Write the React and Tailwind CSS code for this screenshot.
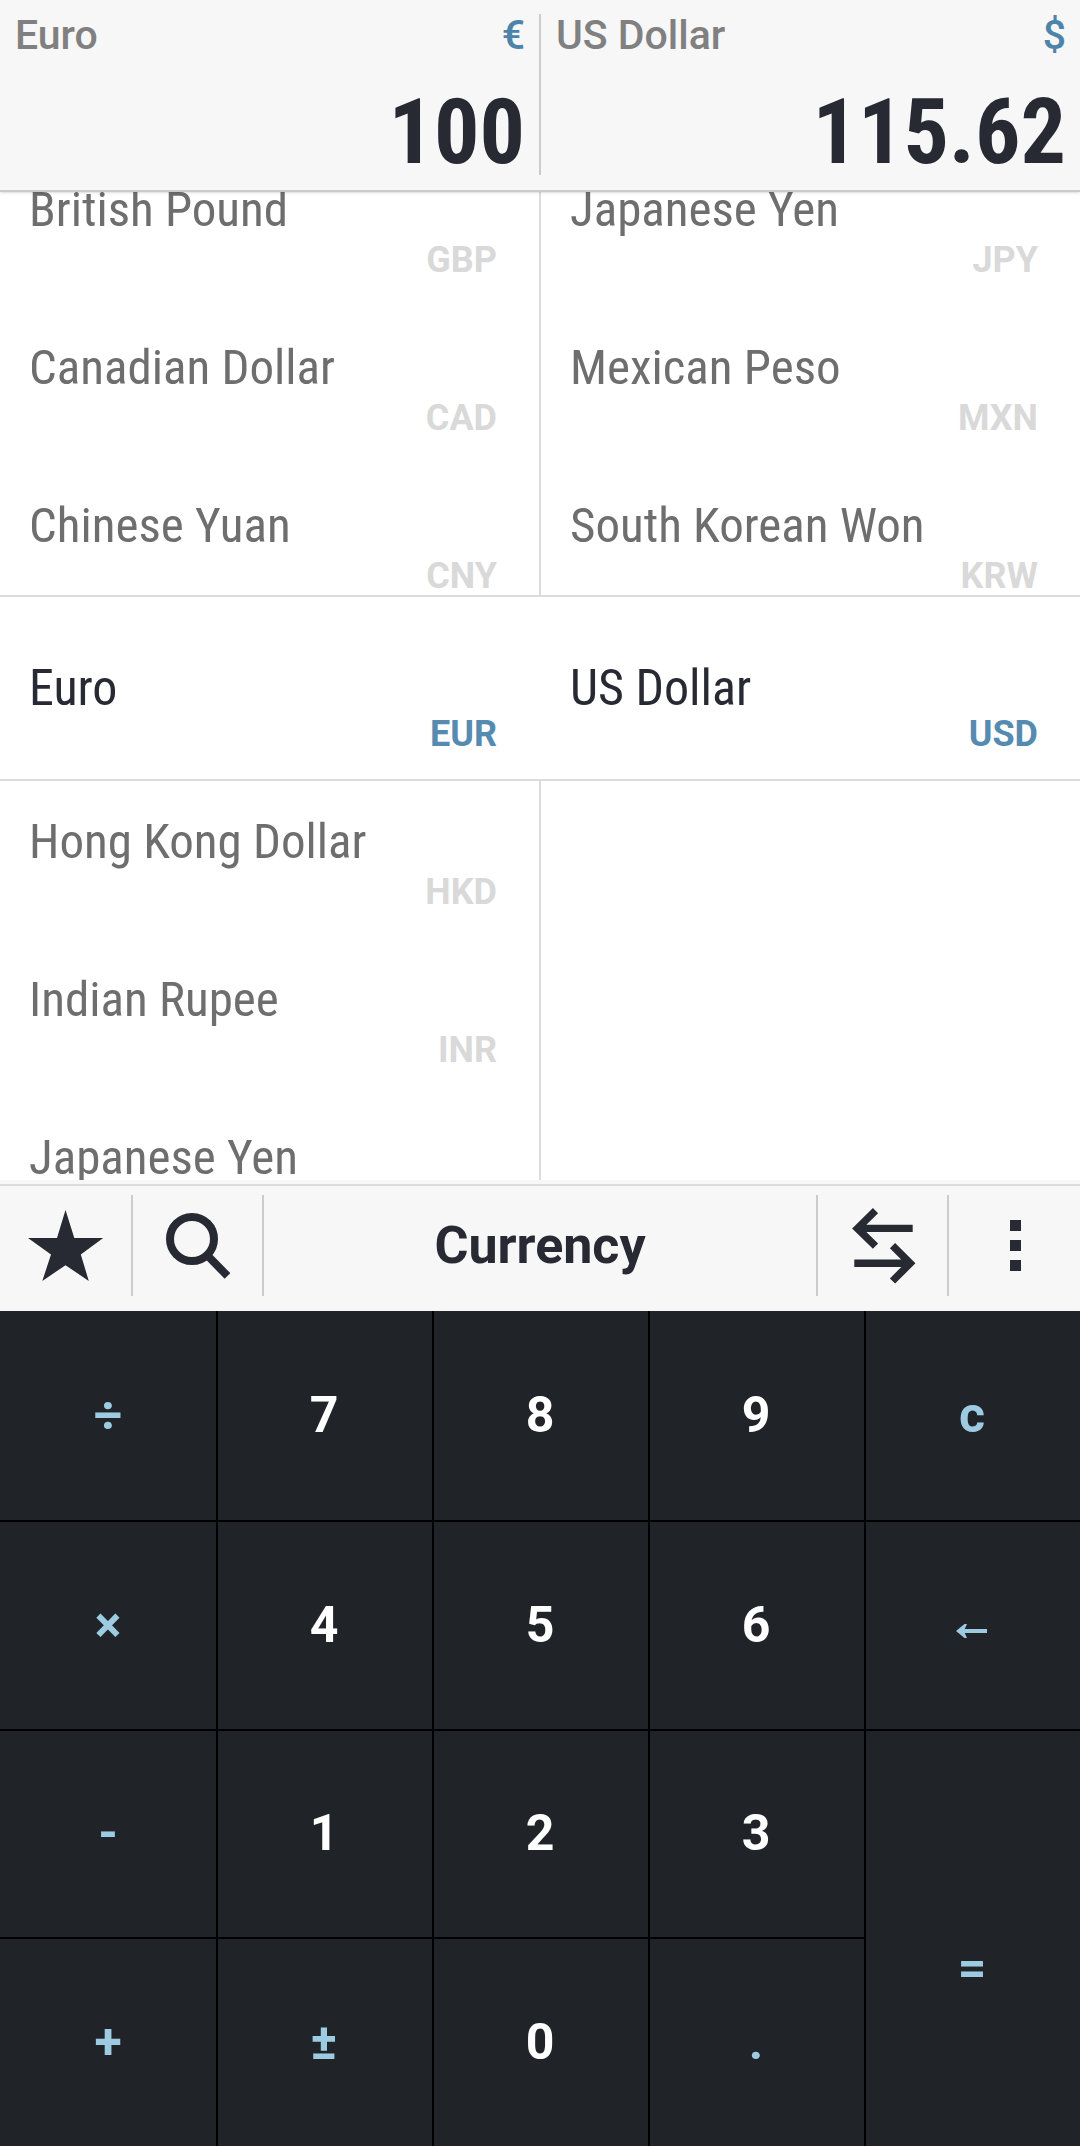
import { useState } from "react";

const fromList = [
  { name: "British Pound", code: "GBP" },
  { name: "Canadian Dollar", code: "CAD" },
  { name: "Chinese Yuan", code: "CNY" },
  { name: "Euro", code: "EUR" },
  { name: "Hong Kong Dollar", code: "HKD" },
  { name: "Indian Rupee", code: "INR" },
  { name: "Japanese Yen", code: "JPY" },
];

const toList = [
  { name: "Japanese Yen", code: "JPY" },
  { name: "Mexican Peso", code: "MXN" },
  { name: "South Korean Won", code: "KRW" },
  { name: "US Dollar", code: "USD" },
];

const RATE = 1.1562;

const keys = [
  "÷", "7", "8", "9", "c",
  "×", "4", "5", "6", "back",
  "-", "1", "2", "3", "=",
  "+", "±", "0", ".",
];


function StarIcon() {
  return (
    <svg width="78" height="74" viewBox="0 0 78 74" fill="currentColor" aria-hidden="true">
      <path d="M38.5 1 47.3 29H76.2L53.8 45.5 61.8 72 38.5 56.2 15.3 72 24 45.5 1 29H30Z" />
    </svg>
  );
}

function SearchIcon() {
  return (
    <svg width="64" height="66" viewBox="0 0 64 66" fill="none" stroke="currentColor" strokeWidth="8" aria-hidden="true">
      <circle cx="26" cy="26" r="22" />
      <path d="M41 42 61.5 63" />
    </svg>
  );
}

function SwapIcon() {
  return (
    <svg width="66" height="78" viewBox="0 0 66 78" fill="none" stroke="currentColor" strokeWidth="7.4" aria-hidden="true">
      <path d="M24.5 3.7 6.4 21.4 24.5 39.2M8 21.4H61.7" />
      <path d="M41.5 38.6 59.2 56.3 41.5 74M3.3 56.3H57" />
    </svg>
  );
}

function MoreIcon() {
  return (
    <svg width="11" height="51" viewBox="0 0 11 51" fill="currentColor" aria-hidden="true">
      <path d="M0 0h11v11H0zM0 20h11v11H0zM0 40h11v11H0z" />
    </svg>
  );
}

function BackIcon() {
  return (
    <svg width="32" height="14" viewBox="0 0 32 14" fill="currentColor" aria-hidden="true">
      <path d="M0 7 8.5 0H11L8.7 5H31V9H8.7L11 14H8.5Z" />
    </svg>
  );
}


function Amount({ id, label, symbol, value, onChange }) {
  return (
    <section className="min-w-0 flex-1 pl-[15px] pr-3.5 pt-3">

      <div className="flex justify-between text-[41px] leading-[47px] font-medium">
        <label htmlFor={id} className="text-[#808080]">{label}</label>
        <span className="text-[#4f84aa]">{symbol}</span>
      </div>

      <input
        id={id}
        type="text"
        inputMode="decimal"
        value={value}
        onChange={onChange}
        readOnly={!onChange}
        className="mt-[18px] block h-[111px] w-full bg-transparent text-right font-['Roboto_Condensed',Roboto,sans-serif] text-[90px] font-bold outline-none"
      />

    </section>
  );
}


function Wheel({ label, items, selected, onSelect, className }) {
  return (
    <ul aria-label={label} className={`h-full min-w-0 flex-1 overflow-hidden ${className}`}>
      {items.map((c, i) => {
        const active = c.code === selected;

        return (
          <li key={c.code} className={i === 0 ? "-mt-[57px]" : ""}>
            <button
              type="button"
              aria-pressed={active}
              onClick={() => onSelect(c)}
              className="relative z-10 flex h-[158px] w-full flex-col justify-end pb-3 pl-[29px] pr-[42px]"
            >
              <span
                className={
                  active
                    ? "text-left font-['Roboto_Condensed',Roboto,sans-serif] text-[50px] leading-[50px]"
                    : "pb-0.5 text-left font-['Roboto_Condensed',Roboto,sans-serif] text-[49px] leading-[54px] text-[#6e6e6e]"
                }
              >
                {c.name}
              </span>
              <span
                className={
                  active
                    ? "text-right text-[36px] leading-[42px] font-bold text-[#568bb1]"
                    : "text-right text-[36px] leading-[42px] font-bold text-[#d9d9d9]"
                }
              >
                {c.code}
              </span>
            </button>
          </li>
        );
      })}
    </ul>
  );
}


export default function App() {

  const [amount, setAmount] = useState("100");
  const [from, setFrom] = useState(fromList[3]);
  const [to, setTo] = useState(toList[3]);

  const result = String(Number(((parseFloat(amount) || 0) * RATE).toFixed(2)));

  const press = (k) => {
    if (k === "c") return setAmount("0");
    if (k === "back") return setAmount((a) => a.slice(0, -1) || "0");
    if (k === "±") return setAmount((a) => String(-Number(a)));
    if (/[0-9.]/.test(k)) setAmount((a) => (a === "0" ? k : a + k));
  };

  return (
    <div className="flex min-h-screen flex-col bg-white font-[Roboto,sans-serif] text-[#282a33]">

      {/* AMOUNTS */}
      <header className="relative z-20 flex h-48 border-b-2 border-[#cccccc] bg-[#f7f7f7] shadow-sm">
        <Amount
          id="from"
          label={from.name}
          symbol="€"
          value={amount}
          onChange={(e) => setAmount(e.target.value)}
        />
        <div className="mt-3.5 mb-[15px] w-0.5 bg-[#cccccc]" />
        <Amount id="to" label={to.name} symbol="$" value={result} />
      </header>


      {/* CURRENCY WHEELS */}
      <main className="relative flex h-[988px] overflow-hidden">
        <Wheel
          label="From"
          items={fromList}
          selected={from.code}
          onSelect={setFrom}
          className="border-r border-[#dcdcdc]"
        />
        <Wheel
          label="To"
          items={toList}
          selected={to.code}
          onSelect={setTo}
          className="border-l border-[#dcdcdc]"
        />
        <div className="absolute inset-x-0 top-[403px] h-[186px] border-y-2 border-[#dcdcdc] bg-white" />
      </main>


      {/* TOOLBAR */}
      <div className="bg-[#f7f7f7] pt-1">
        <div className="flex border-t-2 border-[#dcdcdc] pt-[9px] pb-[15px]">
          <button type="button" aria-label="Favorites" className="flex h-[101px] w-[133px] items-center justify-center border-r-2 border-[#cccccc]">
            <StarIcon />
          </button>
          <button type="button" aria-label="Search" className="flex h-[101px] w-[131px] items-center justify-center border-r-2 border-[#cccccc]">
            <SearchIcon />
          </button>
          <button type="button" className="flex-1 text-[52px] font-bold">
            Currency
          </button>
          <button type="button" aria-label="Swap currencies" className="flex h-[101px] w-[131px] items-center justify-center border-l-2 border-[#cccccc] pl-0.5">
            <SwapIcon />
          </button>
          <button type="button" aria-label="More" className="flex h-[101px] w-[133px] items-center justify-center border-l-2 border-[#cccccc] pl-0.5">
            <MoreIcon />
          </button>
        </div>
      </div>


      {/* KEYPAD */}
      <div className="grid flex-1 grid-cols-5 grid-rows-4 bg-[#202328] text-[50px] font-bold text-[#9dcbe1]">
        {keys.map((k, i) => (
          <button
            key={k}
            type="button"
            aria-label={k === "back" ? "Backspace" : undefined}
            onClick={() => press(k)}
            className={[
              "flex items-center justify-center border-black",
              i > 4 ? "border-t-2" : "",
              i % 5 > 0 ? "border-l-2 pr-0.5" : "",
              /[0-9]/.test(k) ? "text-white" : "",
              k === "=" ? "row-span-2 pt-15" : "",
              k === "back" ? "pt-3" : "",
            ].join(" ")}
          >
            {k === "back" ? <BackIcon /> : k}
          </button>
        ))}
      </div>

    </div>
  );
}
